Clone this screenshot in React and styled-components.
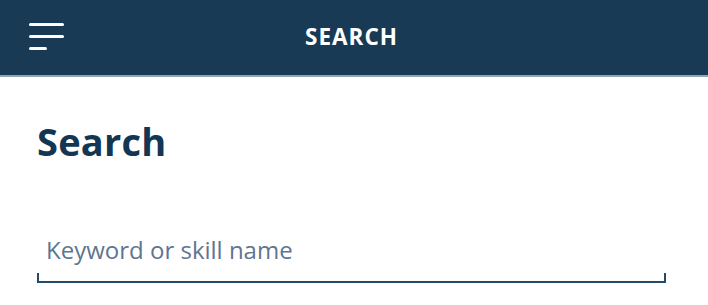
import React from "react";
import styled, { createGlobalStyle } from "styled-components";

const Global = createGlobalStyle`
  html, body { margin: 0; padding: 0; background: #ffffff; }
  body { font-family: "Open Sans", "Liberation Sans", sans-serif; }
`;

const Page = styled.div`
  width: 708px;
  height: 305px;
  background: #ffffff;
  display: flex;
  flex-direction: column;
  overflow: hidden;
`;

const TopBar = styled.header`
  flex: none;
  background: #183a55;
  border-bottom: 2px solid #8fa5b8;
  box-sizing: border-box;
  height: 77px;
  display: grid;
  grid-template-columns: 80px 1fr 80px;
  align-items: center;
`;

const MenuButton = styled.button`
  border: none;
  background: transparent;
  padding: 0 0 3px 29px;
  margin: 0;
  display: flex;
  flex-direction: column;
  justify-content: center;
  gap: 9px;
  cursor: pointer;
  align-self: stretch;
`;

const MenuLine = styled.span`
  display: block;
  height: 3px;
  border-radius: 2px;
  background: #ffffff;
  width: ${(p) => p.$w}px;
`;

const BarTitle = styled.h1`
  margin: 0;
  text-align: center;
  color: #ffffff;
  font-weight: 700;
  font-size: 22.5px;
  letter-spacing: 1px;
  padding: 0 5px 3px 0;
`;

const Content = styled.main`
  padding: 41px 42px 0 37px;
  display: flex;
  flex-direction: column;
`;

const Heading = styled.h2`
  margin: 0;
  color: #123654;
  font-size: 38px;
  font-weight: 700;
  line-height: 46px;
  letter-spacing: 0.2px;
`;

const Field = styled.label`
  margin-top: 68px;
  position: relative;
  display: block;
  width: 629px;
  height: 51px;
  border-bottom: 2px solid #234a69;
  box-sizing: border-box;
  &::before,
  &::after {
    content: "";
    position: absolute;
    bottom: -2px;
    width: 2px;
    height: 10px;
    background: #234a69;
  }
  &::before { left: 0; }
  &::after { right: 0; }
`;

const Input = styled.input`
  border: none;
  outline: none;
  background: transparent;
  width: 100%;
  height: 100%;
  box-sizing: border-box;
  padding: 0 0 14px 9px;
  font-family: "Open Sans", "Liberation Sans", sans-serif;
  font-size: 24px;
  color: #15334f;
  &::placeholder { color: #5e7690; opacity: 1; }
`;

export default function App() {
  return (
    <>
      <Global />
      <Page>
        <TopBar>
          <MenuButton aria-label="Menu">
            <MenuLine $w={35} />
            <MenuLine $w={35} />
            <MenuLine $w={18} />
          </MenuButton>
          <BarTitle>SEARCH</BarTitle>
          <span />
        </TopBar>
        <Content>
          <Heading>Search</Heading>
          <Field>
            <Input placeholder="Keyword or skill name" />
          </Field>
        </Content>
      </Page>
    </>
  );
}
